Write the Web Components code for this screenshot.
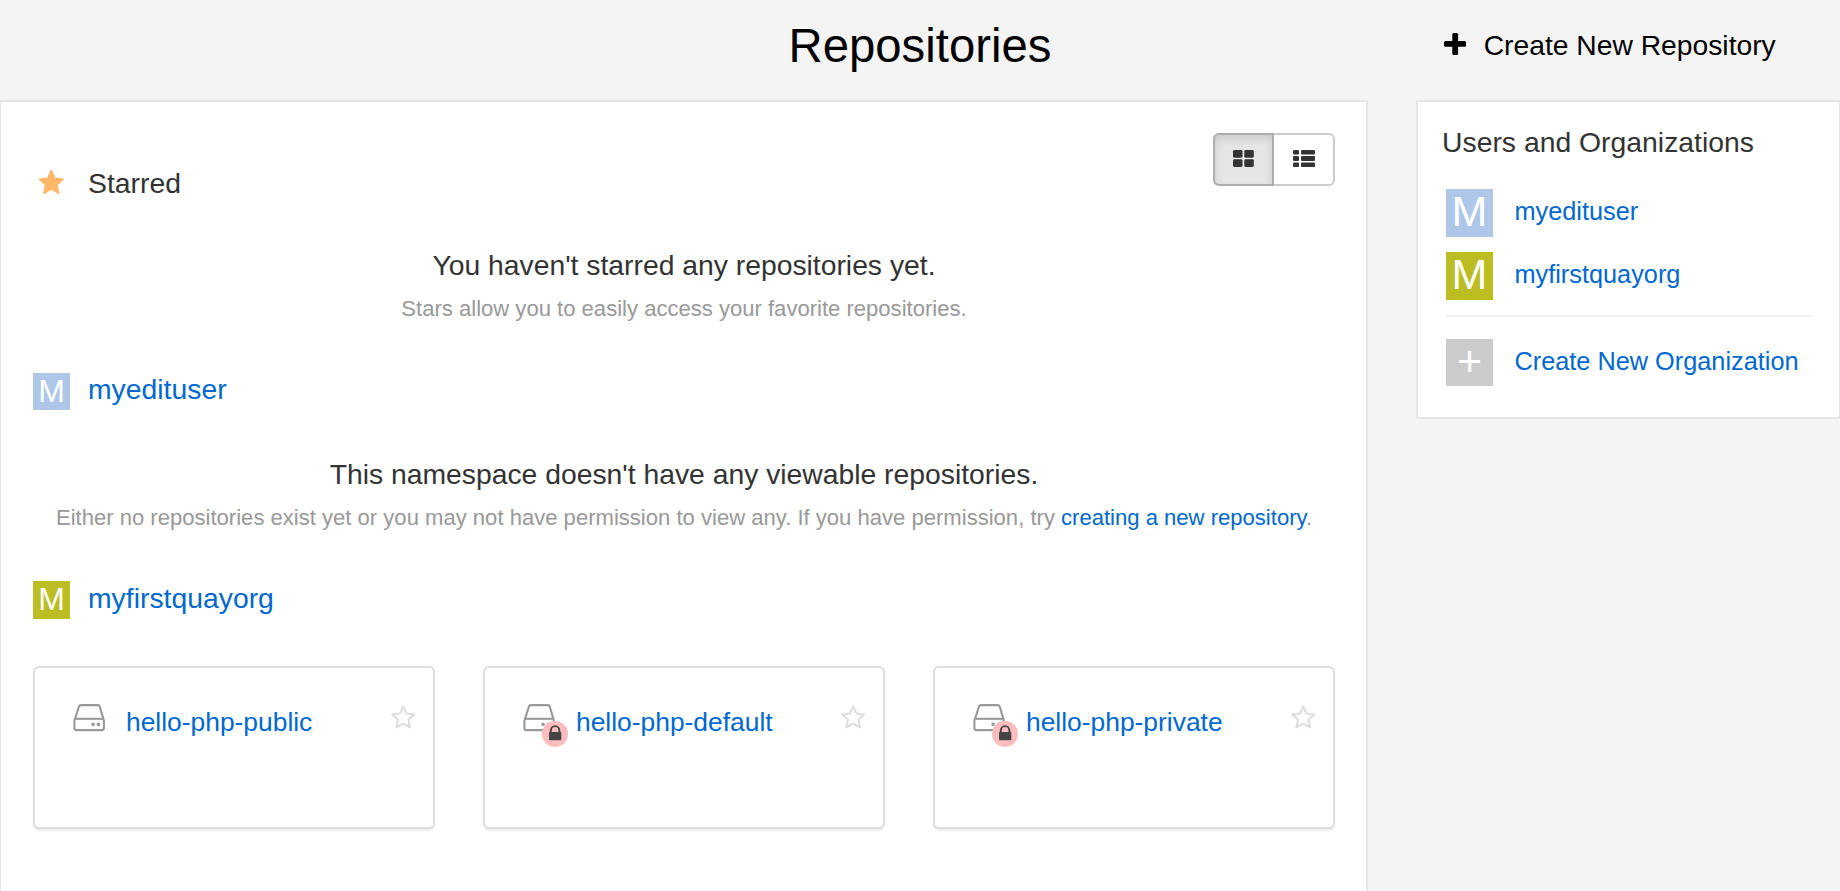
<!DOCTYPE html>
<html lang="en">
<head>
<meta charset="utf-8">
<title>Repositories</title>
<style>
  html, body { margin: 0; height: 100%; }
  body {
    background: #f4f4f4;
    color: #333;
    font-family: "Liberation Sans", Arial, sans-serif;
    overflow: hidden;
  }
</style>
</head>
<body>
<repo-app></repo-app>

<script>
class BaseElement extends HTMLElement {
  connectedCallback() {
    if (this.shadowRoot) return;
    this.attachShadow({ mode: 'open' }).innerHTML =
      `<style>*{box-sizing:border-box} svg{display:block} a{color:#0068cf;text-decoration:none}</style>` + this.render();
  }
}

/* Coloured square holding a single letter */
class UserAvatar extends BaseElement {
  render() {
    return `<style>
      :host { display: block; flex: none; width: 37px; height: 37px; overflow: hidden;
        background: var(--tone, #ccc); color: #fff; text-align: center;
        font-size: 32px; line-height: 37px; }
      :host([large]) { width: 47px; height: 47.5px; font-size: 43px; line-height: 44px; }
      :host([tone=blue]) { --tone: #aec7e8; }
      :host([tone=olive]) { --tone: #bcbd22; }
      :host([add]) { line-height: 44px; }
    </style><slot></slot>`;
  }
}

class SectionHead extends BaseElement {
  render() {
    return `<style>
      :host { display: flex; height: 40px; line-height: 40px; font-size: 28.35px; color: #333; }
      .icon { width: 55px; flex: none; padding-top: var(--icon-top, 4px); }
      ::slotted(a) { color: #0068cf; text-decoration: none; }
    </style><div class="icon"><slot name="icon"></slot></div><div><slot></slot></div>`;
  }
}

class StarIcon extends BaseElement {
  render() {
    const pts = 'M12 1.3 L15.2 8.3 L22.8 9.2 L17.1 14.3 L18.7 22 L12 18.2 L5.3 22 L6.9 14.3 L1.2 9.2 L8.8 8.3 Z';
    const outline = this.hasAttribute('outline');
    return `<style>:host { display: block; }</style>
      <svg width="${outline ? 24.5 : 26.5}" height="${outline ? 23.5 : 25.5}" viewBox="0 0 24 23" preserveAspectRatio="none">
      <path d="${pts}" fill="${outline ? 'none' : '#ffb86a'}" stroke="${outline ? '#ddd' : '#ffb86a'}"
        stroke-width="${outline ? 2 : 1.4}" stroke-linejoin="round"/></svg>`;
  }
}

class ViewToggle extends BaseElement {
  render() {
    return `<style>
      :host { display: flex; width: 122px; height: 53px; }
      button { appearance: none; margin: 0; padding: 0; background: #fff; border: 2px solid #ccc;
        display: flex; justify-content: center; align-items: flex-start; padding-top: 15px; }
      .on { width: 61px; border-color: #adadad; border-radius: 6px 0 0 6px; background: #e6e6e6;
        box-shadow: inset 0 4px 8px rgba(0,0,0,.125); }
      .off { width: 61px; border-left: 0; border-radius: 0 6px 6px 0; }
    </style>
    <button class="on" aria-label="Grid view"><svg width="21" height="17" fill="#333">
      <rect width="9.5" height="7.7" rx="1.4"/><rect x="11.3" width="9.5" height="7.7" rx="1.4"/>
      <rect y="9.2" width="9.5" height="7.8" rx="1.4"/><rect x="11.3" y="9.2" width="9.5" height="7.8" rx="1.4"/></svg></button>
    <button class="off" aria-label="List view"><svg width="22" height="17" fill="#333">
      <rect width="6" height="4.5" rx="1.2"/><rect x="8" width="14" height="4.5" rx="1"/>
      <rect y="6.1" width="6" height="4.8" rx="1.2"/><rect x="8" y="6.1" width="14" height="4.8" rx="1"/>
      <rect y="12.4" width="6" height="4.6" rx="1.2"/><rect x="8" y="12.4" width="14" height="4.6" rx="1"/></svg></button>`;
  }
}

class EmptyMessage extends BaseElement {
  render() {
    return `<style>
      :host { display: block; text-align: center; white-space: nowrap; }
      .title { font-size: 28.3px; line-height: 40px; color: #333; }
      .text { font-size: 22.07px; line-height: 30px; color: #999; padding-top: 9px; }
      ::slotted(a) { color: #0068cf; text-decoration: none; }
    </style><div class="title"><slot name="title"></slot></div><div class="text"><slot></slot></div>`;
  }
}

class RepoCard extends BaseElement {
  render() {
    const lock = this.hasAttribute('locked') ? `<svg class="lock" width="26" height="26">
      <circle cx="13" cy="13" r="13" fill="#ffbcbe"/>
      <path d="M8.8 12 V9.4 A4.3 4.3 0 0 1 17.4 9.4 V12" fill="none" stroke="#444" stroke-width="1.9"/>
      <rect x="7" y="11.1" width="12.3" height="8.2" rx=".8" fill="#444"/></svg>` : '';
    return `<style>
      :host { display: flex; height: 163px; background: #fff; border: 2px solid #ddd; border-radius: 6px;
        box-shadow: 0 2px 2px #eee; padding: 35px 17.5px 0 38px; }
      .drive { position: relative; width: 53px; flex: none; padding-top: .5px; }
      .lock { position: absolute; left: 19px; top: 17.5px; }
      .name { flex: 1; font-size: 26.4px; line-height: 38px; }
      star-icon { padding-top: 2px; }
    </style>
    <div class="drive"><svg width="33" height="28" fill="none" stroke="#999" stroke-width="2.1">
      <path d="M1.4 16.6 L5.9 2.7 Q6.5 1.1 8 1.1 H24.8 Q26.2 1.1 26.8 2.7 L30.9 16.6 V24 Q30.9 26.1 28.8 26.1 H3.5 Q1.4 26.1 1.4 24 Z" stroke-linejoin="round"/>
      <path d="M2 14.8 H30.4"/><g fill="#999" stroke="none"><circle cx="20.1" cy="20.4" r="1.8"/><circle cx="25.4" cy="20.4" r="1.8"/></g></svg>${lock}</div>
    <div class="name"><a href="#"><slot></slot></a></div>
    <star-icon outline></star-icon>`;
  }
}

class PageHeader extends BaseElement {
  render() {
    return `<style>
      :host { display: grid; grid-template-columns: 424px 1fr 424px; height: 100px; color: #000; }
      h1 { grid-column: 2; margin: 0; text-align: center; font-weight: 400; font-size: 47.3px; line-height: 92px; }
      .create { display: flex; padding-left: 28px; gap: 17.7px; font-size: 28.25px; line-height: 90px; white-space: nowrap; }
      svg { margin-top: 33px; }
    </style>
    <h1>Repositories</h1>
    <div class="create"><svg width="22" height="22"><rect x="8.3" width="5.8" height="22" rx="1.5"/><rect y="8" width="22" height="5.8" rx="1.5"/></svg><span>Create New Repository</span></div>`;
  }
}

class OrgItem extends BaseElement {
  render() {
    return `<style>
      :host { display: flex; gap: 21.5px; font-size: 25.3px; line-height: 44px; white-space: nowrap; }
    </style><slot name="icon"></slot><a href="#"><slot></slot></a>`;
  }
}

class OrgPanel extends BaseElement {
  render() {
    return `<style>
      :host { display: block; height: 319px; background: #fff; border: 2px solid #e5e5e5; border-right-width: 1px; padding: 20px 28px 0; }
      h2 { margin: 0 0 0 -4px; font-weight: 400; font-size: 28.35px; line-height: 40px; color: #333; }
      .list { display: grid; row-gap: 15.5px; padding-top: 27px; }
      hr { border: 0; height: 2px; background: #eee; margin: 15px 0 22px; }
    </style>
    <h2>Users and Organizations</h2>
    <div class="list">
      <org-item><user-avatar slot="icon" large tone="blue">M</user-avatar>myedituser</org-item>
      <org-item><user-avatar slot="icon" large tone="olive">M</user-avatar>myfirstquayorg</org-item>
    </div>
    <hr>
    <org-item><user-avatar slot="icon" large add>+</user-avatar>Create New Organization</org-item>`;
  }
}

class RepoList extends BaseElement {
  render() {
    return `<style>
      :host { display: block; background: #fff; border: solid #e5e5e5; border-width: 2px 2px 0 1px; padding: 31px 31px 0 32px; }
      .top { display: flex; justify-content: space-between; height: 70px; }
      .top section-head { margin-top: 30px; --icon-top: 6px; }
      .top star-icon { padding-left: 5px; }
      .cards { display: grid; grid-template-columns: repeat(3, 402px); justify-content: space-between; margin-top: 48px; }
    </style>
    <div class="top">
      <section-head><star-icon slot="icon"></star-icon>Starred</section-head>
      <view-toggle></view-toggle>
    </div>
    <empty-message style="margin-top:42px"><span slot="title">You haven't starred any repositories yet.</span>Stars allow you to easily access your favorite repositories.</empty-message>
    <section-head style="margin-top:45px"><user-avatar slot="icon" tone="blue">M</user-avatar><a href="#">myedituser</a></section-head>
    <empty-message style="margin-top:45px"><span slot="title">This namespace doesn't have any viewable repositories.</span>Either no repositories exist yet or you may not have permission to view any. If you have permission, try <a href="#">creating a new repository</a>.</empty-message>
    <section-head style="margin-top:45px;--icon-top:3px"><user-avatar slot="icon" tone="olive" style="height:38px">M</user-avatar><a href="#">myfirstquayorg</a></section-head>
    <div class="cards">
      <repo-card>hello-php-public</repo-card>
      <repo-card locked>hello-php-default</repo-card>
      <repo-card locked>hello-php-private</repo-card>
    </div>`;
  }
}

class RepoApp extends BaseElement {
  render() {
    return `<style>
      :host { display: block; width: 1840px; height: 891px; }
      .body { display: grid; grid-template-columns: 1368px 424px; column-gap: 48px; height: 791px; align-items: start; }
      repo-list { height: 791px; }
    </style>
    <page-header></page-header>
    <div class="body"><repo-list></repo-list><org-panel></org-panel></div>`;
  }
}

customElements.define('user-avatar', UserAvatar);
customElements.define('section-head', SectionHead);
customElements.define('star-icon', StarIcon);
customElements.define('view-toggle', ViewToggle);
customElements.define('empty-message', EmptyMessage);
customElements.define('repo-card', RepoCard);
customElements.define('page-header', PageHeader);
customElements.define('org-item', OrgItem);
customElements.define('org-panel', OrgPanel);
customElements.define('repo-list', RepoList);
customElements.define('repo-app', RepoApp);
</script>
</body>
</html>
